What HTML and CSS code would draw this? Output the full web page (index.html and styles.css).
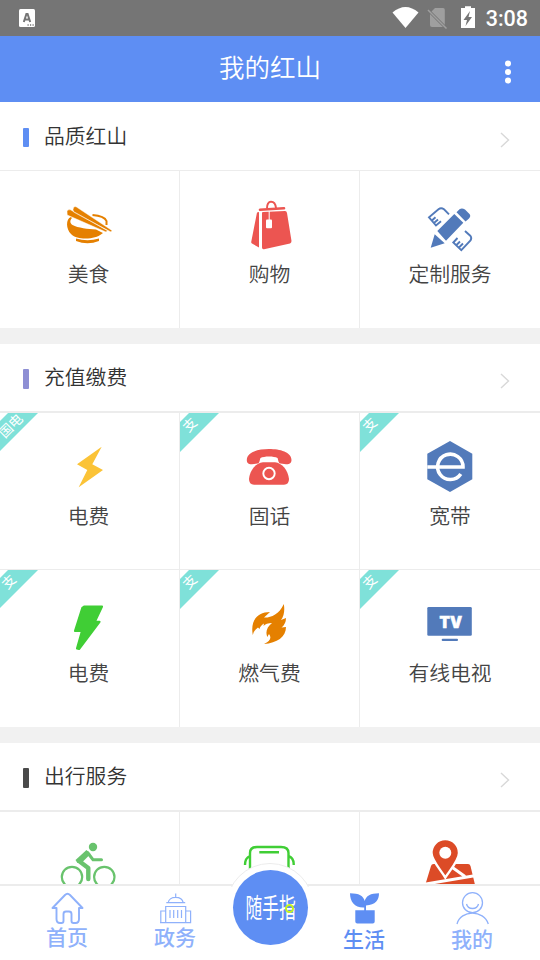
FILE: index.html
```
<!DOCTYPE html>
<html lang="zh-CN">
<head>
<meta charset="utf-8">
<title>我的红山</title>
<link rel="stylesheet" href="styles.css">
</head>
<body>
<div class="status">
  <svg class="status-app" width="16" height="18" viewBox="0 0 16 18"><rect width="16" height="18" rx="1.5" fill="#fff"/><path d="M4.8 13 7.4 5h1.2l2.6 8M5.8 10.5h4.6" fill="none" stroke="#757575" stroke-width="2"/><path d="M8.5 16h1.2m1.3 0h1.2m1.3 0h1.2" stroke="#757575" stroke-width="1.3"/></svg>
  <svg class="status-icons" width="84" height="24" viewBox="392 5 84 24"><path d="M392.5 12.5Q405.5 1.5 418.500 12.500L405.500 28Z" fill="#fff"/><path d="M435 8h8q1.800 0 1.800 1.800V25q0 2-1.800 2h-11q-2 0-2-2V13Z" fill="#9f9f9f"/><path d="m428 10 18.500 18.500" stroke="#757575" stroke-width="3"/><path d="m428 10 18.500 18.500" stroke="#9f9f9f" stroke-width="1.500"/><path d="M461 8h4V6.300h6V8h4v20h-14Z" fill="#fff"/><path d="m470 11-6.500 9h3.500l-1.500 6 6.500-9H468.500Z" fill="#757575"/></svg>
  <span class="clock">3:08</span>
</div>
<header class="header"><h1>我的红山</h1><svg class="more" width="8" height="26" viewBox="0 0 8 26"><g fill="#fff"><circle cx="4" cy="4.500" r="3"/><circle cx="4" cy="13" r="3"/><circle cx="4" cy="21.500" r="3"/></g></svg></header>
<main class="content">
  <section class="section first">
    <div class="head"><i class="mark blue"></i><h2>品质红山</h2><svg class="arrow" viewBox="0 0 10 16"><path d="m1 1 7.500 7L1 15"/></svg></div>
    <div class="grid">
      <div class="cell"><svg class="icon" viewBox="59 196 62 60"><g fill="#e58000"><path d="M71 217C65.500 219 66 229 71 234C75 238 82 239 88 238.500C95 238 99.500 236 103 233L96 229.500C88 229 78 228 72.500 225C69.500 223 70 220 72 218Z"/><path d="M76 238.500Q87.500 242 99 238.500V241Q87.500 245.500 76 241Z"/><path d="M67 211.500Q67.500 209 70.500 209.800L107.500 230.700 106 232 67.200 215ZM73 209.500Q73.500 205.500 76.500 207L112 230.500 111 232 73.500 212Z" stroke="#fff" stroke-width=".5"/></g><path d="M92.500 215Q104.500 216 106.500 221V225" fill="none" stroke="#e58000" stroke-width="2"/></svg><span>美食</span></div>
      <div class="cell"><svg class="icon" viewBox="239 196 62 60"><g fill="#ec5551"><path d="M257 212.500 259 212V247.500L252 243.500Q251 243 251.300 241.500ZM262 213Q262 212 263 212L285 211Q286.700 211 287 213L291.500 241Q291.500 243 290 243.400L264 249.200Q262 249.500 262 247.500Z"/></g><path d="M260 209.700 284 208.300" stroke="#ec5551" stroke-width="2.600" stroke-linecap="round"/><path d="M267 208.500C266.500 199.500 275 199.500 276 208" fill="none" stroke="#ec5551" stroke-width="2"/><path d="M269.200 211v9" stroke="#fff"/><rect x="266" y="219.500" width="6" height="8.800" rx="1" fill="#fff"/></svg><span>购物</span></div>
      <div class="cell"><svg class="icon" viewBox="419 196 62 60"><path d="m430.700 247.700 4-13.400 10 9ZM437.300 231 454.300 214 463.300 222.700 446 240.700ZM456.500 212.300 459.500 209.200Q462 207.500 465 209.500L469.500 214Q471.200 216 469 218.500L465.500 221.500Z" fill="#527aba"/><path d="m449 214.300-5-5q-3-2-5.500 0l-9.500 8 7 8.200 5-4.200M432.500 220l3-2.700M434.500 222.500l3.500-3M465 231l5.500 5q1.500 2 0 4.500l-9.200 9.700-8-7.700 4.200-4.500M456.500 245l3.500-3.500M459 247.500l4-4" fill="none" stroke="#527aba" stroke-width="1.900"/></svg><span>定制服务</span></div>
    </div>
  </section>
  <section class="section">
    <div class="head"><i class="mark purple"></i><h2>充值缴费</h2><svg class="arrow" viewBox="0 0 10 16"><path d="m1 1 7.500 7L1 15"/></svg></div>
    <div class="grid">
      <div class="cell"><b class="ribbon wide"><em>国电</em></b><svg class="icon" viewBox="59 438 62 60"><path d="M101.700 446.700 77 464.300 87.300 470 78.700 487.300 103 470 92.300 464.300Z" fill="#fbc337"/></svg><span>电费</span></div>
      <div class="cell"><b class="ribbon"><em>支</em></b><svg class="icon" viewBox="239 438 62 60"><g fill="#ec5551"><path d="M246.800 460C247 452 258 449 269 449S291.500 452 291.500 460C291.500 463.500 289 464.500 286 464.300L280.500 463.600C278 463 278.500 460 277.500 458C274 456 264 456 260.500 458C259.500 460 260 463 257.500 463.600L252 464.300C249 464.500 246.800 463.500 246.800 460Z"/><path d="M249 479C250 470 256 463 263 462.300H275C282 463 288 470 289 479Q289 484.700 284 484.700H254Q249 484.700 249 479Z"/></g><circle cx="269" cy="473.500" r="5.700" fill="none" stroke="#fff" stroke-width="1.900"/></svg><span>固话</span></div>
      <div class="cell"><b class="ribbon"><em>支</em></b><svg class="icon" viewBox="419 438 62 60"><path d="M450 441 472.300 453.700V479.300L450 492 427.300 479.300V453.700Z" fill="#527aba"/><path d="M427.300 467H463A12.700 12.700 0 1 0 460.800 474" fill="none" stroke="#fff" stroke-width="3.600"/></svg><span>宽带</span></div>
      <div class="cell"><b class="ribbon wide"><em class="single">支</em></b><svg class="icon" viewBox="59 595 62 60"><path d="M84.500 606.500H102L94.800 621.800H99.500L79 649 77 648.500 82 631H75L82.300 608Z" fill="#40ce35" stroke="#40ce35" stroke-width="2.200" stroke-linejoin="round"/></svg><span>电费</span></div>
      <div class="cell"><b class="ribbon"><em>支</em></b><svg class="icon" viewBox="239 595 62 60"><path d="M252.800 635C250 620 258 612 270 612L264 617.500C270 618 279 615 283.800 604Q285.500 614 281 620L286 618Q286 624 281.500 627.500L286 627C286 637 277 643 264 644C270 641 272 638 269 634Q267 637 267.500 637.500C265 632 267 627 272 623Q266 623 263.500 626L264 623.500Q260 626 259.500 629L258 627.500Q254 630 252.800 635Z" fill="#e58000"/></svg><span>燃气费</span></div>
      <div class="cell"><b class="ribbon"><em>支</em></b><svg class="icon" viewBox="419 595 62 60"><rect x="427.300" y="607" width="44.500" height="28.700" rx="1.300" fill="#527aba"/><rect x="441.700" y="638.700" width="16.300" height="2.300" rx="1" fill="#527aba"/><text class="tv" x="439.500" y="627.500" textLength="22.500" lengthAdjust="spacingAndGlyphs">TV</text></svg><span>有线电视</span></div>
    </div>
  </section>
  <section class="section">
    <div class="head"><i class="mark dark"></i><h2>出行服务</h2><svg class="arrow" viewBox="0 0 10 16"><path d="m1 1 7.500 7L1 15"/></svg></div>
    <div class="grid">
      <div class="cell"><svg class="icon" viewBox="59 837 62 60"><circle cx="93" cy="847" r="4.200" fill="#69c36d"/><g fill="none" stroke="#69c36d"><circle cx="72" cy="877" r="10.200" stroke-width="2.200"/><circle cx="104.300" cy="877" r="10.200" stroke-width="2.200"/><path d="m86 854-7 7 9.300 7V879" stroke-width="4.400" stroke-linecap="round" stroke-linejoin="round"/><path d="m87.500 852.500 5.500 7.200h8.500" stroke-width="3" stroke-linecap="round"/></g><path d="m86.500 850 4 4-8 8-5 1-2-3Z" fill="#69c36d"/></svg></div>
      <div class="cell"><svg class="icon" viewBox="239 837 62 60"><path d="M250 872V853Q250 847 257 847H281Q288.500 847 288.500 853V872M259.300 852.300H279M250 856Q245 858 245 865M288.500 856Q294 858 293.700 865" fill="none" stroke="#40ce35" stroke-width="2.400"/></svg></div>
      <div class="cell"><svg class="icon" viewBox="419 837 62 60"><path d="M431 866Q431.500 864 433.500 864H468Q470 864 470.500 866L476 889H424Z" fill="#dc4b27"/><path d="M423 884.500 476 875.500M451 866.500 465 876.500" stroke="#fff" stroke-width="3"/><path d="M445.300 839A13.700 13.700 0 0 1 459 853C459 860 451 869 445.300 877.500C440 869 431.500 860 431.500 853A13.700 13.700 0 0 1 445.300 839Z" fill="#dc4b27" stroke="#fff" stroke-width="2.400"/><circle cx="445.300" cy="852.700" r="6" fill="#fff"/></svg></div>
    </div>
  </section>
</main>
<nav class="tabs">
  <div class="tab"><svg viewBox="48 890 38 36"><path d="M52.500 908 65 895Q67.500 892.500 70 895L82.500 908H79V919Q79 923 75.500 923H73.500Q71.500 923 71.500 921V914Q71.500 911.500 69 911.500H66Q63.500 911.500 63.500 914V921Q63.500 923 61.500 923H60Q56.500 923 56.500 919V908Z" stroke-width="1.900" stroke-linejoin="round"/></svg><span>首页</span></div>
  <div class="tab"><svg viewBox="156 890 38 36"><path d="M175.700 893.500V897M168.200 902.700C169 895.500 182 895.500 183.200 902.700M166.300 902.700H185.200M165.700 922.700V906.500H185.700V922.700M165.700 911H160.800V922.700H190.600V911H185.700M160 922.700H191.200M170 910V918M173.700 910V918M177.700 910V918M181.500 910V918" stroke-width="1.200"/></svg><span>政务</span></div>
  <div class="snap"><div class="snap-ring"></div><div class="snap-disc"><span>随手指</span><i></i></div></div>
  <div class="tab low active"><svg viewBox="345 890 38 36"><path d="M350 893.300C359 893.300 363.500 896 364.700 901C366 896 370.500 893.300 379 893.300C379 900 375.500 905 366 905.500V910.300H374.700V921.500Q374.700 923.500 372.700 923.500H357.300Q355.300 923.500 355.300 921.500V910.300H364.200V907.500C355 908 350 902 350 893.300Z"/></svg><span>生活</span></div>
  <div class="tab low"><svg viewBox="453 890 38 36"><circle cx="472.500" cy="902.700" r="10" stroke-width="1.300"/><path d="M466.500 904C468 910 477 910 478.500 904M457 924C460.500 909.500 484 909.500 488.300 924" stroke-width="1.300"/></svg><span>我的</span></div>
</nav>
</body>
</html>
```
FILE: styles.css
```
* { box-sizing: border-box; }
body {
  margin: 0;
  width: 540px;
  height: 960px;
  overflow: hidden;
  display: flex;
  flex-direction: column;
  background: #fff;
  font-family: "Noto Sans CJK SC", sans-serif;
}
h1, h2 { margin: 0; font-weight: 400; }
svg { display: block; flex: none; }

.status {
  height: 36px;
  flex: none;
  display: flex;
  align-items: center;
  padding: 0 12px 0 19px;
  background: #757575;
}
.status-icons { margin-left: auto; margin-top: -2px; }
.clock {
  margin-left: 10px;
  margin-top: 1px;
  color: #fff;
  font: 500 21.5px/36px Roboto, sans-serif;
}

.header {
  height: 66px;
  flex: none;
  display: grid;
  grid-template-columns: 1fr auto 1fr;
  align-items: center;
  padding-right: 28px;
  padding-left: 28px;
  background: #5e8ef3;
}
.header h1 { grid-column: 2; color: #fff; font-size: 25.5px; line-height: 38px; padding-bottom: 6px; font-weight: 350; }
.more { justify-self: end; margin-top: 5px; }

.content { flex: 1; min-height: 0; overflow: hidden; background: #f1f1f1; }
.section { background: #fff; margin-bottom: 16px; }
.head {
  height: 69px;
  display: flex;
  align-items: center;
  padding: 0 30px 0 23px;
  border-bottom: 2px solid #ececec;
}
.first .head { border-bottom-width: 1px; }
.mark { width: 6px; height: 20px; margin-top: 3px; border-radius: 1px; }
.first .mark { height: 19px; margin-top: 2px; }
.blue { background: #5e8ef3; }
.purple { background: #8e8fd4; }
.dark { background: #4a4a4a; }
.head h2 { margin: 0 0 3px 15px; font-size: 20.8px; line-height: 32px; color: #333; font-weight: 350; }
.first .head h2 { margin-bottom: 2px; }
.arrow { width: 10px; height: 16px; margin: 7px 0 0 auto; fill: none; stroke: #d8d8d8; stroke-width: 1.4; }

.grid { display: grid; grid-template-columns: repeat(3, 180px); grid-auto-rows: 157px; }
.cell {
  position: relative;
  display: flex;
  flex-direction: column;
  align-items: center;
  padding-top: 25px;
  border-right: 1px solid #ececec;
  border-bottom: 1px solid #ececec;
}
.cell:nth-child(3n) { border-right: 0; }
.cell:nth-child(3n+1) span { padding-right: 2px; }
.cell:nth-child(n+4), .first .cell { border-bottom: 0; }
.icon { width: 62px; height: 60px; align-self: flex-start; margin-left: 59px; }
.cell span { margin-top: 2px; font-size: 20.8px; line-height: 30px; color: #444; font-weight: 350; }
.tv { font: 900 15.4px Inter, sans-serif; fill: #fff; stroke: #fff; stroke-width: .6px; }

.ribbon {
  position: absolute;
  left: 0;
  top: 0;
  width: 39px;
  height: 39px;
  background: #7fe1d9;
  clip-path: polygon(9px 0, 100% 0, 0 100%, 0 9px);
  color: #fff;
  font-weight: 400;
}
.ribbon.wide { width: 38px; height: 38px; clip-path: polygon(8px 0, 100% 0, 0 100%, 0 8px); }
.ribbon em {
  position: absolute;
  left: -1px;
  top: 1px;
  width: 20px;
  font-size: 13.5px;
  line-height: 20px;
  text-align: center;
  font-style: normal;
  transform: rotate(-45deg);
}
.ribbon.wide em { left: -10px; top: 2px; width: 40px; }
.ribbon.wide em.single { left: -2px; top: 1px; width: 20px; }

.tabs {
  position: relative;
  height: 76px;
  flex: none;
  display: flex;
  padding: 0 13px 0 13px;
  background: #fff;
  border-top: 2px solid #ececec;
}
.tab {
  width: 108px;
  display: flex;
  flex-direction: column;
  align-items: center;
  padding-top: 4px;
  color: #8fb1fb;
}
.tab svg { width: 38px; height: 36px; fill: none; stroke: currentColor; }
.tab span { font-size: 21px; line-height: 30px; margin-top: -5px; font-weight: 500; }
.tab.low span { margin-top: -3px; }
.tab.active { color: #5e8ef3; }
.tab.active svg { fill: currentColor; stroke: none; }
.snap { position: relative; width: 81px; }
.snap-ring {
  position: absolute;
  left: -3px;
  top: -23px;
  width: 88px;
  height: 88px;
  border: 1px solid #ececec;
  border-radius: 50%;
  background: #fff;
  clip-path: inset(0 0 64px 0);
}
.snap-disc {
  position: absolute;
  left: 4px;
  top: -16px;
  width: 75px;
  height: 75px;
  border-radius: 50%;
  background: #5e8ef3;
  display: flex;
  align-items: center;
  justify-content: center;
}
.snap-disc span { color: #fff; font-size: 25px; font-weight: 400; white-space: nowrap; transform: translateY(-2px) scale(.67, 1.08); }
.snap-disc i {
  position: absolute;
  left: 52px;
  top: 34px;
  width: 9px;
  height: 9px;
  border: 2.5px solid #c6f31b;
  border-radius: 50%;
}
```
